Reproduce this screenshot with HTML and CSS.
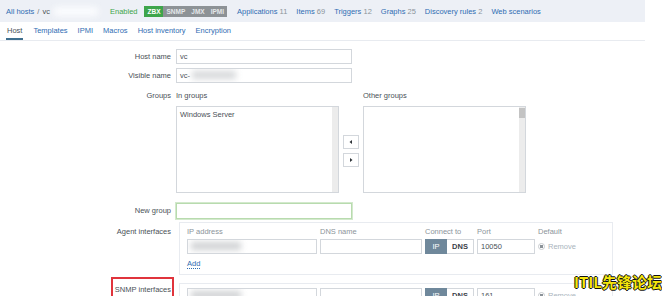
FILE: index.html
```html
<!DOCTYPE html>
<html lang="en">
  <head>
    <meta charset="UTF-8" />
    <title>Host vc</title>
    <link rel="stylesheet" href="styles.css">
  </head>
  <body>
    <div class="page">
      <nav class="host-nav">
        <a class="link" href="#">All hosts</a>
        <span class="sep">/</span>
        <span class="crumb-cur">vc</span>
        <span class="mask crumb-mask"></span>
        <span class="status-on">Enabled</span>
        <span class="avail">
          <span class="badge badge-green">ZBX</span><span class="badge">SNMP</span><span class="badge">JMX</span><span class="badge">IPMI</span>
        </span>
        <span class="nav-item"><a class="link" href="#">Applications</a> <span class="count">11</span></span>
        <span class="nav-item"><a class="link" href="#">Items</a> <span class="count">69</span></span>
        <span class="nav-item"><a class="link" href="#">Triggers</a> <span class="count">12</span></span>
        <span class="nav-item"><a class="link" href="#">Graphs</a> <span class="count">25</span></span>
        <span class="nav-item"><a class="link" href="#">Discovery rules</a> <span class="count">2</span></span>
        <span class="nav-item"><a class="link" href="#">Web scenarios</a></span>
      </nav>

      <ul class="tabs">
        <li class="tab active">Host</li>
        <li class="tab">Templates</li>
        <li class="tab">IPMI</li>
        <li class="tab">Macros</li>
        <li class="tab">Host inventory</li>
        <li class="tab">Encryption</li>
      </ul>

      <form class="form">
        <div class="row row-host">
          <label class="row-label">Host name</label>
          <div class="row-field">
            <div class="input">vc</div>
          </div>
        </div>

        <div class="row row-visible">
          <label class="row-label">Visible name</label>
          <div class="row-field">
            <div class="input">vc-<span class="mask input-mask"></span></div>
          </div>
        </div>

        <div class="row row-groups">
          <label class="row-label label-top">Groups</label>
          <div class="row-field groups">
            <div class="groups-head">In groups</div>
            <div></div>
            <div class="groups-head">Other groups</div>

            <div class="listbox">
              <div class="list-items">
                <div class="list-item">Windows Server</div>
              </div>
              <div class="scroll-track"></div>
            </div>
            <div class="move-buttons">
              <button type="button" class="move-btn">
                <svg viewBox="0 0 6 6"><polygon points="4,1 1.5,3 4,5" /></svg>
              </button>
              <button type="button" class="move-btn">
                <svg viewBox="0 0 6 6"><polygon points="2,1 4.5,3 2,5" /></svg>
              </button>
            </div>
            <div class="listbox">
              <div class="list-items list-other">
                <div class="list-item faint">&middot; &middot; &middot; &middot; &middot; &middot;</div>
              </div>
              <div class="scroll-track">
                <div class="scroll-thumb"></div>
              </div>
            </div>
          </div>
        </div>

        <div class="row row-newgroup">
          <label class="row-label">New group</label>
          <div class="row-field">
            <div class="input input-green"></div>
          </div>
        </div>

        <div class="row row-agent">
          <label class="row-label label-agent">Agent interfaces</label>
          <div class="row-field">
            <div class="iface">
              <div class="iface-grid">
                <div class="iface-head">IP address</div>
                <div class="iface-head">DNS name</div>
                <div class="iface-head">Connect to</div>
                <div class="iface-head">Port</div>
                <div class="iface-head">Default</div>

                <div class="input"><span class="mask ip-mask"></span></div>
                <div class="input"></div>
                <div class="seg">
                  <span class="seg-btn seg-on">IP</span><span class="seg-btn">DNS</span>
                </div>
                <div class="input">10050</div>
                <div class="default">
                  <span class="radio"></span>
                  <span class="remove">Remove</span>
                </div>
              </div>
              <a class="add-link" href="#">Add</a>
            </div>
          </div>
        </div>

        <div class="row row-snmp">
          <label class="row-label"><span class="marked">SNMP interfaces</span></label>
          <div class="row-field">
            <div class="iface iface-snmp">
              <div class="iface-grid">
                <div class="input"><span class="mask ip-mask"></span></div>
                <div class="input"></div>
                <div class="seg">
                  <span class="seg-btn seg-on">IP</span><span class="seg-btn">DNS</span>
                </div>
                <div class="input">161</div>
                <div class="default">
                  <span class="radio"></span>
                  <span class="remove">Remove</span>
                </div>
              </div>
            </div>
          </div>
        </div>
      </form>
    </div>

    <div class="watermark">ITIL先锋论坛</div>
  </body>
</html>
```

FILE: styles.css
```css
:root {
  --bar: #edf0f6;
  --link: #2f6db3;
  --text: #4a5157;
  --muted: #8b949a;
  --border: #d3d7dc;
  --line: #e8ebf0;
  --green: #3ea54b;
}

html,
body {
  overflow: hidden;
}

body {
  margin: 0;
  background: #fff;
  color: var(--text);
  font-family: "Liberation Sans", Arial, sans-serif;
  font-size: 7.5px;
}

.page {
  width: 645px;
}

.link {
  color: var(--link);
  text-decoration: none;
}

.mask {
  display: inline-block;
  filter: blur(3px);
}

/* top navigation */
.host-nav {
  display: flex;
  align-items: center;
  height: 22px;
  padding: 1px 0 0 6px;
  box-sizing: border-box;
  background: var(--bar);
  white-space: nowrap;
}

.sep {
  margin: 0 3px;
  color: #6d767d;
}

.crumb-cur {
  color: var(--text);
}

.crumb-mask {
  width: 44px;
  height: 9px;
  margin-left: 4px;
  background: #fbfcfe;
}

.status-on {
  margin-left: 12px;
  color: var(--green);
}

.avail {
  display: flex;
  margin-left: 7px;
}

.badge {
  padding: 0 3px;
  line-height: 11px;
  font-size: 6.5px;
  font-weight: bold;
  background: #8d9296;
  color: #e4e7ea;
}

.badge-green {
  background: var(--green);
  color: #fff;
}

.nav-item {
  margin-left: 9px;
}

.avail + .nav-item {
  margin-left: 10px;
}

.count {
  color: var(--muted);
}

/* tabs */
.tabs {
  display: flex;
  gap: 10px;
  margin: 0;
  padding: 0 0 0 7px;
  height: 18px;
  list-style: none;
  border-bottom: 1px solid var(--line);
}

.tab {
  padding-top: 4px;
  line-height: 10px;
  color: var(--link);
}

.tab.active {
  color: var(--text);
  border-bottom: 2px solid #3f6f8e;
  margin-left: -1px;
  padding: 4px 1px 0;
  height: 12px;
}

/* form */
.form {
  padding-top: 8px;
}

.row {
  display: flex;
}

.row-label {
  width: 171px;
  margin-right: 5px;
  flex-shrink: 0;
  text-align: right;
  line-height: 15px;
  color: var(--text);
}

.row-visible {
  margin-top: 4px;
}

.row-groups {
  margin-top: 7px;
}

.row-newgroup {
  margin-top: 10px;
}

.row-agent {
  margin-top: 3px;
}

.row-snmp {
  margin-top: 5px;
}

.label-top {
  line-height: 12px;
}

.label-agent {
  padding-top: 2px;
}

.input {
  width: 176px;
  height: 15px;
  box-sizing: border-box;
  padding: 0 3px;
  border: 1px solid var(--border);
  background: #fff;
  line-height: 13px;
  color: var(--text);
  white-space: nowrap;
  overflow: hidden;
}

.input-mask {
  width: 44px;
  height: 8px;
  margin-left: 2px;
  vertical-align: -1px;
  background: #d6d8da;
}

.input-green {
  height: 16px;
  border-color: #b8dbae;
  box-shadow: 0 0 0 1px #d3e9cd;
}

/* groups */
.groups {
  display: grid;
  grid-template-columns: 163px 16px 163px;
  column-gap: 4px;
  row-gap: 4px;
}

.groups-head {
  line-height: 12px;
  color: var(--text);
}

.listbox {
  display: flex;
  height: 87px;
  border: 1px solid var(--border);
  box-sizing: border-box;
  background: #fff;
  overflow: hidden;
}

.list-items {
  flex: 1;
  padding: 2px 3px;
}

.list-item {
  line-height: 11px;
  color: var(--text);
}

.list-other {
  display: flex;
  flex-direction: column;
  justify-content: flex-end;
  padding-bottom: 0;
}

.list-other .list-item {
  margin-bottom: -6px;
}

.list-item.faint {
  color: #c5c9cc;
  letter-spacing: 1px;
}

.scroll-track {
  width: 6px;
  background: #ececec;
}

.scroll-thumb {
  height: 10px;
  margin-top: 1px;
  background: #c3c3c3;
}

.move-buttons {
  display: flex;
  flex-direction: column;
  gap: 4px;
  align-self: center;
  padding-top: 2px;
}

.move-btn {
  display: flex;
  align-items: center;
  justify-content: center;
  width: 16px;
  height: 14px;
  padding: 0;
  border: 1px solid var(--border);
  background: #fff;
}

.move-btn svg {
  width: 6px;
  height: 6px;
  fill: #2e3338;
}

/* interfaces */
.iface {
  width: 434px;
  margin-left: 3px;
  padding: 4px 7px 5px;
  box-sizing: border-box;
  border: 1px solid var(--line);
}

.iface-snmp {
  margin-top: 3px;
}

.iface-grid {
  display: grid;
  grid-template-columns: 130px 102px 49px 58px auto;
  column-gap: 3px;
  row-gap: 2px;
  align-items: center;
}

.iface-head {
  line-height: 10px;
  color: var(--muted);
}

.iface-grid .input {
  width: auto;
}

.ip-mask {
  width: 50px;
  height: 8px;
  vertical-align: -1px;
  background: #cfd1d3;
}

.seg {
  display: flex;
  height: 15px;
}

.seg-btn {
  width: 27px;
  box-sizing: border-box;
  border: 1px solid var(--border);
  border-left: none;
  line-height: 13px;
  text-align: center;
  font-weight: bold;
  color: #3b4248;
  background: #fff;
}

.seg-on {
  width: 22px;
  border: none;
  line-height: 15px;
  font-weight: normal;
  color: #fff;
  background: #6f889b;
}

.default {
  display: flex;
  align-items: center;
  gap: 3px;
}

.radio {
  width: 5px;
  height: 5px;
  border: 1px solid #c7cbcf;
  border-radius: 50%;
  background: radial-gradient(#8b9298 45%, #fff 55%);
}

.remove {
  color: #a9b4bc;
}

.add-link {
  display: inline-block;
  margin-top: 5px;
  line-height: 9px;
  color: var(--link);
  text-decoration: none;
  border-bottom: 1px dotted var(--link);
}

.marked {
  display: inline-block;
  margin: -3px -3px 0 0;
  padding: 6px 1px 8px 2px;
  line-height: 10px;
  border: 2px solid #e0343c;
}

.watermark {
  position: absolute;
  left: 574px;
  top: 273px;
  white-space: nowrap;
  font-family: "Noto Sans CJK SC", "Liberation Sans", sans-serif;
  font-size: 15px;
  font-weight: bold;
  line-height: 18px;
  color: #f6e60c;
  text-shadow: 1px 0 #111, -1px 0 #111, 0 1px #111, 0 -1px #111;
}
```
